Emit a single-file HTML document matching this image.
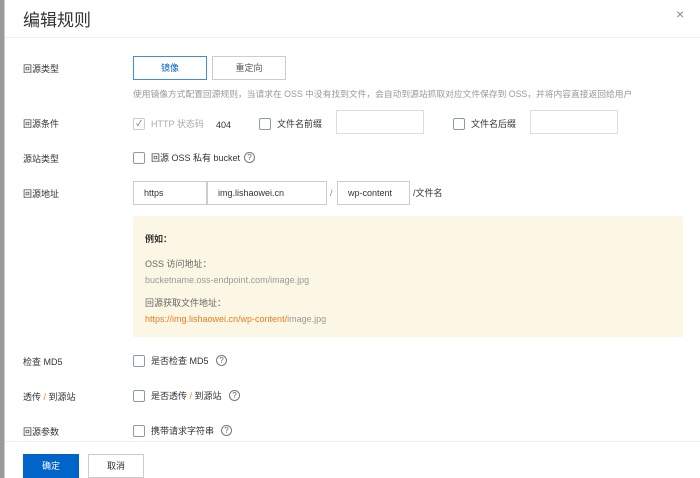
<!DOCTYPE html>
<html><head><meta charset="utf-8">
<style>
*{margin:0;padding:0;box-sizing:border-box}
body{width:700px;height:478px;overflow:hidden;background:#fff;font-family:"Liberation Sans","Noto Sans CJK SC",sans-serif;color:#333;position:relative}
.a{position:absolute;white-space:nowrap}
.lbl{font-size:9px;color:#333;left:23px}
.t{font-size:9px;color:#333;line-height:12px}
.cb{position:absolute;width:12px;height:12px;border:1px solid #8a9bb0;border-radius:2px;background:#fff}
.inp{position:absolute;border:1px solid #ccc;height:24px;font-size:9px;color:#333;padding-left:10px;line-height:22px;background:#fff}
.q{position:absolute;width:11px;height:11px;border:1px solid #777;border-radius:50%;font-size:8px;line-height:9px;text-align:center;color:#666}
.btn{position:absolute;height:24px;border:1px solid #ccc;font-size:9px;text-align:center;line-height:22px;background:#fff;color:#333}
</style></head><body>
<div class="a" style="left:0;top:0;width:5px;height:478px;background:#9a9a9a;border-right:1px solid #ccc"></div>
<div class="a" style="left:23px;top:6px;font-size:17px;color:#333">编辑规则</div>
<div class="a" style="left:676px;top:6px;font-size:14px;color:#888">×</div>
<div class="a" style="left:5px;top:37px;width:695px;height:1px;background:#f0f0f0"></div>

<div class="a lbl" style="top:62px">回源类型</div>
<div class="btn" style="left:133px;top:56px;width:74px;border-color:#3e8ce0;color:#0064c8">镜像</div>
<div class="btn" style="left:212px;top:56px;width:74px;color:#555">重定向</div>
<div class="a" style="left:133px;top:87px;font-size:8.75px;color:#999">使用镜像方式配置回源规则，当请求在 OSS 中没有找到文件，会自动到源站抓取对应文件保存到 OSS，并将内容直接返回给用户</div>

<div class="a lbl" style="top:117px">回源条件</div>
<div class="cb" style="left:133px;top:118px;border-color:#ccc;font-size:8px;line-height:10px;text-align:center;color:#666">✓</div>
<div class="a t" style="left:151px;top:118px;color:#aaa">HTTP 状态码</div>
<div class="a t" style="left:216px;top:119px">404</div>
<div class="cb" style="left:259px;top:118px"></div>
<div class="a t" style="left:277px;top:118px">文件名前缀</div>
<div class="inp" style="left:336px;top:110px;width:88px;border-color:#ddd"></div>
<div class="cb" style="left:453px;top:118px"></div>
<div class="a t" style="left:471px;top:118px">文件名后缀</div>
<div class="inp" style="left:530px;top:110px;width:88px;border-color:#ddd"></div>

<div class="a lbl" style="top:152px">源站类型</div>
<div class="cb" style="left:133px;top:152px"></div>
<div class="a t" style="left:151px;top:152px">回源 OSS 私有 bucket</div>
<div class="q" style="left:244px;top:152px">?</div>

<div class="a lbl" style="top:187px">回源地址</div>
<div class="inp" style="left:133px;top:181px;width:74px">https</div>
<div class="inp" style="left:207px;top:181px;width:120px">img.lishaowei.cn</div>
<div class="a t" style="left:330px;top:187px;color:#888">/</div>
<div class="inp" style="left:337px;top:181px;width:73px">wp-content</div>
<div class="a t" style="left:413px;top:187px">/文件名</div>

<div class="a" style="left:133px;top:216px;width:550px;height:121px;background:#fcf7e4"></div>
<div class="a t" style="left:145px;top:233px;font-weight:bold">例如：</div>
<div class="a t" style="left:145px;top:258px;color:#666">OSS 访问地址：</div>
<div class="a t" style="left:145px;top:274px;color:#999">bucketname.oss-endpoint.com/image.jpg</div>
<div class="a t" style="left:145px;top:297px;color:#666">回源获取文件地址：</div>
<div class="a t" style="left:145px;top:313px;color:#999"><span style="color:#f07a1e">https://img.lishaowei.cn/wp-content/</span>image.jpg</div>

<div class="a lbl" style="top:355px">检查 MD5</div>
<div class="cb" style="left:133px;top:355px"></div>
<div class="a t" style="left:151px;top:355px">是否检查 MD5</div>
<div class="q" style="left:216px;top:355px">?</div>

<div class="a lbl" style="top:390px">透传 <span style="color:#f07a1e">/</span> 到源站</div>
<div class="cb" style="left:133px;top:390px"></div>
<div class="a t" style="left:151px;top:390px">是否透传 <span style="color:#f07a1e">/</span> 到源站</div>
<div class="q" style="left:229px;top:390px">?</div>

<div class="a lbl" style="top:425px">回源参数</div>
<div class="cb" style="left:133px;top:425px"></div>
<div class="a t" style="left:151px;top:425px">携带请求字符串</div>
<div class="q" style="left:221px;top:425px">?</div>

<div class="a" style="left:5px;top:441px;width:695px;height:1px;background:#eee"></div>
<div class="btn" style="left:23px;top:454px;width:56px;background:#0064c8;border-color:#0064c8;color:#fff">确定</div>
<div class="btn" style="left:88px;top:454px;width:56px">取消</div>
</body></html>
